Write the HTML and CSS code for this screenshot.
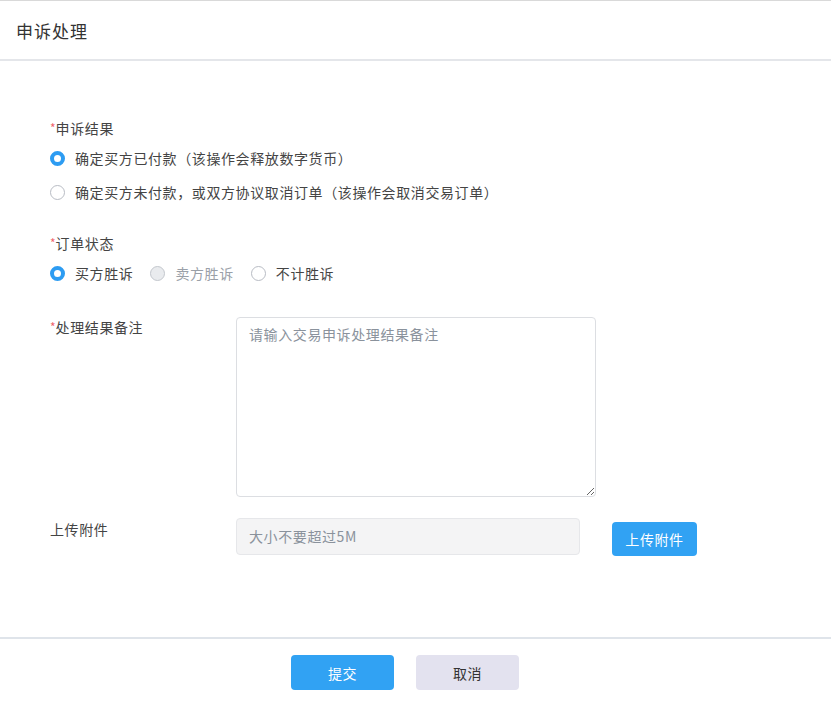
FILE: index.html
```html
<!DOCTYPE html>
<html lang="zh">
<head>
<meta charset="utf-8">
<title>申诉处理</title>
<link rel="stylesheet" href="styles.css">
</head>
<body>
<div class="dialog">
  <div class="dialog-header">
    <span class="dialog-title">申诉处理</span>
  </div>
  <div class="dialog-body">
    <div class="group group-result">
      <div class="label"><span class="req">*</span>申诉结果</div>
      <div class="radio-row">
        <span class="radio checked"></span><span class="radio-text">确定买方已付款（该操作会释放数字货币）</span>
      </div>
      <div class="radio-row">
        <span class="radio"></span><span class="radio-text">确定买方未付款，或双方协议取消订单（该操作会取消交易订单）</span>
      </div>
    </div>
    <div class="group group-status">
      <div class="label"><span class="req">*</span>订单状态</div>
      <div class="radio-row inline">
        <span class="radio-item"><span class="radio checked"></span><span class="radio-text">买方胜诉</span></span>
        <span class="radio-item disabled"><span class="radio"></span><span class="radio-text">卖方胜诉</span></span>
        <span class="radio-item"><span class="radio"></span><span class="radio-text">不计胜诉</span></span>
      </div>
    </div>
    <div class="field-row field-remark">
      <div class="field-label"><span class="req">*</span>处理结果备注</div>
      <textarea class="textarea" placeholder="请输入交易申诉处理结果备注"></textarea>
    </div>
    <div class="field-row field-upload">
      <div class="field-label">上传附件</div>
      <div class="upload-input">大小不要超过5M</div>
      <button class="btn btn-primary btn-upload">上传附件</button>
    </div>
  </div>
  <div class="dialog-footer">
    <button class="btn btn-primary btn-footer">提交</button>
    <button class="btn btn-cancel btn-footer">取消</button>
  </div>
</div>
</body>
</html>
```
FILE: styles.css
```css
* { box-sizing: border-box; }
html, body {
  margin: 0;
  padding: 0;
  background: #fff;
}
body {
  font-family: "Noto Sans CJK SC", "Liberation Sans", sans-serif;
  font-size: 14px;
  color: #444;
  letter-spacing: 0.6px;
  text-spacing-trim: space-all;
}
.dialog {
  width: 831px;
  height: 705px;
  border-top: 1px solid #d9d9d9;
  display: flex;
  flex-direction: column;
}
.dialog-header {
  height: 60px;
  padding: 0 16px;
  display: flex;
  align-items: center;
  border-bottom: 2px solid #e4e6ea;
}
.dialog-title {
  font-size: 17px;
  letter-spacing: 1px;
  color: #333;
  margin-top: 1px;
}
.dialog-body {
  height: 576px;
  padding: 57px 0 0 50px;
}
.label {
  line-height: 20px;
  height: 20px;
  color: #444;
}
.req {
  color: #f0646d;
  font-size: 12px;
  letter-spacing: 0;
  vertical-align: top;
}
.group-result .label { margin-bottom: 3px; }
.radio-row {
  height: 34px;
  display: flex;
  align-items: center;
}
.radio-item {
  display: inline-flex;
  align-items: center;
  margin-right: 17px;
}
.radio {
  width: 15px;
  height: 15px;
  border-radius: 50%;
  border: 1px solid #b8bcc4;
  background: #fff;
  flex: none;
}
.radio.checked {
  border: 4px solid #2d9cf2;
}
.radio-text {
  margin-left: 10px;
  color: #444;
  line-height: 20px;
}
.radio-item.disabled .radio {
  background: #e9ebee;
  border-color: #c3c7cd;
}
.radio-item.disabled .radio-text {
  color: #9aa0a8;
}
.group-status {
  margin-top: 24px;
}
.group-status .label { margin-bottom: 3px; }
.field-row {
  display: flex;
  align-items: flex-start;
}
.field-label {
  width: 186px;
  flex: none;
  line-height: 20px;
  color: #444;
}
.field-remark {
  margin-top: 27px;
}
.textarea {
  width: 360px;
  height: 180px;
  border: 1px solid #dcdee2;
  border-radius: 4px;
  padding: 6px 12px;
  font-family: inherit;
  font-size: 14px;
  letter-spacing: 0.6px;
  line-height: 20px;
  color: #444;
  resize: both;
  outline: none;
}
.textarea::placeholder {
  color: #8a929c;
}
.field-upload {
  margin-top: 21px;
}
.field-upload .field-label {
  margin-top: 1px;
}
.upload-input {
  width: 344px;
  height: 37px;
  background: #f4f4f5;
  border: 1px solid #e6e7ea;
  border-radius: 4px;
  padding: 0 12px;
  line-height: 35px;
  color: #8a929c;
}
.btn {
  border: none;
  border-radius: 4px;
  font-family: inherit;
  font-size: 14px;
  letter-spacing: 0.6px;
  padding: 0;
  cursor: pointer;
}
.btn-primary {
  background: #31a2f3;
  color: #fff;
}
.btn-upload {
  width: 85px;
  height: 34px;
  margin-left: 32px;
  margin-top: 4px;
}
.dialog-footer {
  border-top: 2px solid #dfe4ea;
  flex: 1;
  display: flex;
  align-items: flex-start;
  padding: 16px 0 0 291px;
  gap: 22px;
}
.btn-footer {
  width: 103px;
  height: 35px;
}
.btn-cancel {
  background: #e3e2ef;
  color: #333;
}
```
